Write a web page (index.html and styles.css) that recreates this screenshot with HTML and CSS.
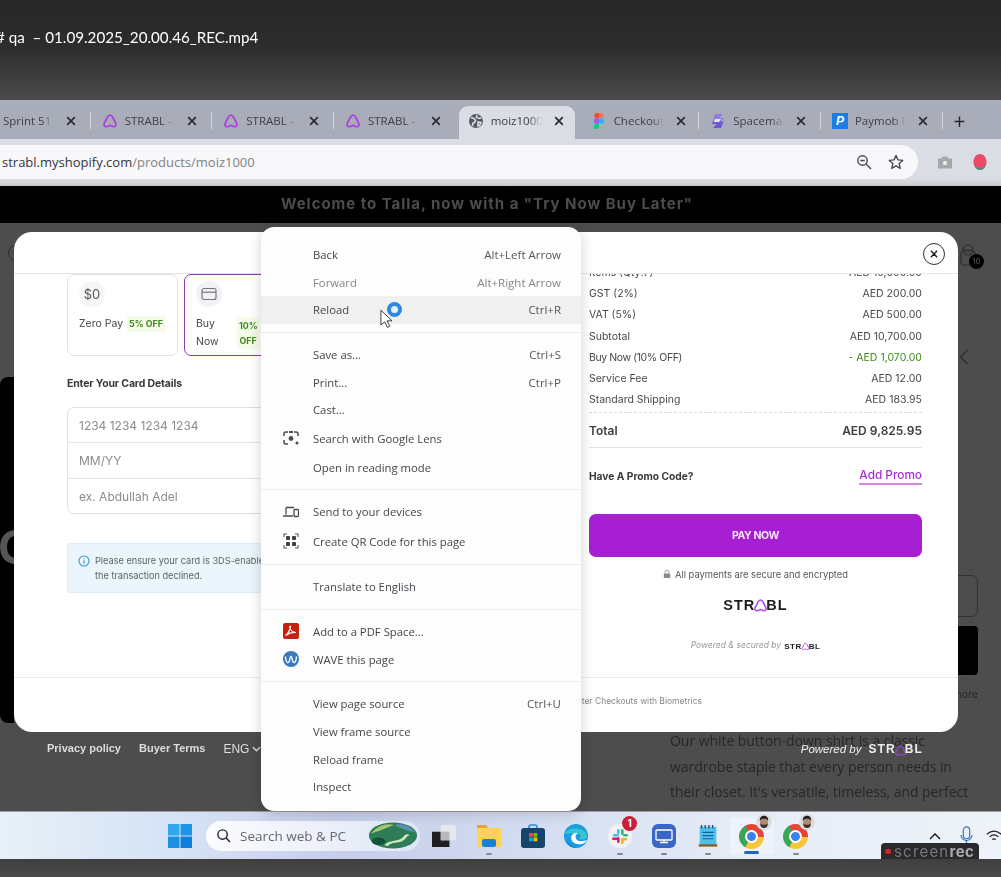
FILE: index.html
```html
<!DOCTYPE html>
<html lang="en">
<head>
    <meta charset="UTF-8">
    <meta name="viewport" content="width=device-width, initial-scale=1.0">
    <title>qa - 01.09.2025_20.00.46_REC.mp4</title>
    <link rel="stylesheet" href="styles.css">
</head>
<body>
    <svg class="defs" width="0" height="0">
        <symbol id="mark" viewBox="0 0 16 16">
            <path d="M8 2.2C9.5 2.2 10.3 3.6 11 5l2.6 5c1.2 2.4-.6 4-2.4 3.6-1.4-.3-2.2-1.2-3.2-1.2s-1.8.9-3.2 1.2C3 14 1.2 12.4 2.4 10L5 5c.7-1.4 1.5-2.8 3-2.8z" fill="none" stroke="currentColor" stroke-width="1.7"/>
        </symbol>
        <symbol id="close" viewBox="0 0 12 12">
            <path d="M2.2 2.2l7.6 7.6M9.8 2.2l-7.6 7.6" fill="none" stroke="currentColor" stroke-width="1.7"/>
        </symbol>
        <symbol id="face" viewBox="0 0 16 16">
            <circle cx="8" cy="8" r="8" fill="#dcdde0"/>
            <ellipse cx="8" cy="8.500" rx="4" ry="5" fill="#b08a6e"/>
            <path d="M3.800 7C3.500 3 6 1.800 8 1.800S12.500 3 12.200 7c-1-1.800-2-2.300-4.200-2.300S4.800 5.200 3.800 7z" fill="#27221f"/>
            <path d="M4.200 9.500c1 1 2 1.300 3.800 1.300s2.800-.3 3.800-1.300c0 3-1.600 4.500-3.800 4.500S4.200 12.500 4.200 9.500z" fill="#3a302a"/>
        </symbol>
    </svg>

    <div class="frame">
        <header class="video-title"><span>#&nbsp;qa &nbsp;– 01.09.2025_20.00.46_REC.mp4</span></header>

        <div class="tabstrip">
            <div class="tab">
                <span class="tab-icon"></span><span class="tab-label">Sprint 51</span>
                <svg class="tab-close"><use href="#close"/></svg>
            </div>
            <div class="tab">
                <svg class="tab-icon mark-icon"><use href="#mark"/></svg><span class="tab-label">STRABL - Checkout</span>
                <svg class="tab-close"><use href="#close"/></svg>
            </div>
            <div class="tab">
                <svg class="tab-icon mark-icon"><use href="#mark"/></svg><span class="tab-label">STRABL - Checkout</span>
                <svg class="tab-close"><use href="#close"/></svg>
            </div>
            <div class="tab tab-before-active">
                <svg class="tab-icon mark-icon"><use href="#mark"/></svg><span class="tab-label">STRABL - Checkout</span>
                <svg class="tab-close"><use href="#close"/></svg>
            </div>
            <div class="tab tab-active">
                <svg class="tab-icon" viewBox="0 0 16 16">
                    <circle cx="8" cy="8" r="7" fill="#55585f"/>
                    <path d="M3 4.5l3 1 1.5 2-1 2-1.5.5-.5 3M9 2l-.5 2.5 2.5 1 2.500-1M10 9l3 .5-1.500 3-1.500 .5z" fill="none" stroke="#dadde4" stroke-width="1.6"/>
                </svg>
                <span class="tab-label">moiz1000</span>
                <svg class="tab-close"><use href="#close"/></svg>
            </div>
            <div class="tab tab-after-active">
                <svg class="tab-icon" viewBox="0 0 16 16">
                    <path d="M8 0H5.500a2.700 2.700 0 0 0 0 5.300H8z" fill="#f24e1e"/>
                    <path d="M8 0h2.500a2.700 2.700 0 0 1 0 5.300H8z" fill="#ff7262"/>
                    <path d="M8 5.300H5.500a2.700 2.700 0 0 0 0 5.400H8z" fill="#a259ff"/>
                    <circle cx="10.500" cy="8" r="2.700" fill="#1abcfe"/>
                    <path d="M5.500 10.700H8v2.600a2.650 2.650 0 1 1-2.500-2.600z" fill="#0acf83"/>
                </svg>
                <span class="tab-label">Checkout</span>
                <svg class="tab-close"><use href="#close"/></svg>
            </div>
            <div class="tab">
                <svg class="tab-icon" viewBox="0 0 16 16">
                    <path d="M5 1h8L9.500 5H14l-3 4H2.500z" fill="#8f7be8"/>
                    <path d="M3 8.500h10.500L11 15H3l3.500-4H2z" fill="#6f57d8"/>
                    <path d="M5 6h6L9 9H4z" fill="#e6e3f5"/>
                </svg>
                <span class="tab-label">Spacemail</span>
                <svg class="tab-close"><use href="#close"/></svg>
            </div>
            <div class="tab">
                <span class="tab-icon paymob-icon">P</span><span class="tab-label">Paymob Dash</span>
                <svg class="tab-close"><use href="#close"/></svg>
            </div>
            <div class="tab-plus">+</div>
        </div>

        <div class="toolbar">
            <div class="omnibox">
                <span class="url"><b>strabl.myshopify.com</b>/products/moiz1000</span>
                <svg class="omni-icon" viewBox="0 0 16 16">
                    <circle cx="6.500" cy="6.500" r="4.700" fill="none" stroke="#45484f" stroke-width="1.400"/>
                    <path d="M10 10l5 5M4.300 6.500h4.400" fill="none" stroke="#45484f" stroke-width="1.400"/>
                </svg>
                <svg class="omni-icon" viewBox="0 0 16 16">
                    <path d="M8 1.500l2 4.400 4.700.5-3.500 3.200 1 4.700L8 11.900l-4.200 2.400 1-4.700L1.300 6.400 6 5.900z" fill="none" stroke="#45484f" stroke-width="1.400" stroke-linejoin="round"/>
                </svg>
            </div>
            <svg class="camera" viewBox="0 0 16 14">
                <path d="M1 3.500h3.500L6 1.500h4l1.500 2H15v10H1z" fill="#a5a7ab"/>
                <circle cx="8" cy="8" r="2.600" fill="#eee" stroke="#a5a7ab"/>
            </svg>
            <svg class="avatar" viewBox="0 0 16 18">
                <path d="M8 1c4 0 7 4 6.500 9-.4 4-3.500 7-6.500 7s-6-3-6.500-7C1 5 4 1 8 1z" fill="#ec4b68"/>
                <path d="M2.500 12c2 4 9 4 11 0-.5 3-3 5-5.500 5s-5-2-5.500-5z" fill="#2f9c74"/>
            </svg>
        </div>

        <div class="banner">Welcome to Talla, now with a "Try Now Buy Later"</div>

        <main class="page">
            <div class="page-left">
                <span class="store-logo"></span>
                <div class="hero"><span class="hero-letter">C</span></div>
            </div>
            <div class="page-right">
                <div class="cart">
                    <svg class="cart-icon" viewBox="0 0 18 22">
                        <rect x="1" y="7" width="14" height="14" rx="3" fill="none" stroke="#2e2e2e" stroke-width="1.200"/>
                        <circle cx="8" cy="6" r="5" fill="none" stroke="#2e2e2e" stroke-width="1.200"/>
                        <path d="M3 6h10" stroke="#2e2e2e"/>
                    </svg>
                    <span class="cart-badge">10</span>
                </div>
                <svg class="gallery-arrow" viewBox="0 0 10 16"><path d="M8.500 1L1.500 8l7 7" fill="none" stroke="#2e2e2e" stroke-width="1.300"/></svg>
                <div class="size-box"></div>
                <div class="buy-box"></div>
                <div class="more-link">Learn more</div>
                <p class="description">Our white button-down shirt is a classic wardrobe staple that every person needs in their closet. It's versatile, timeless, and perfect</p>
            </div>

            <div class="overlay">
                <section class="modal">
                    <div class="modal-head">
                        <button class="modal-close"><svg><use href="#close"/></svg></button>
                    </div>
                    <div class="modal-body">
                        <div class="pay-col">
                            <div class="plans">
                                <div class="plan">
                                    <span class="plan-icon">$0</span>
                                    <div class="plan-line"><span>Zero Pay</span><span class="off">5% OFF</span></div>
                                </div>
                                <div class="plan plan-active">
                                    <span class="plan-icon plan-icon-active">
                                        <svg viewBox="0 0 16 14"><rect x="1" y="1.500" width="14" height="11" rx="2" fill="none" stroke="#777" stroke-width="1.200"/><path d="M1 5.200h14" stroke="#777" stroke-width="1.200"/></svg>
                                    </span>
                                    <div class="plan-line"><span class="plan-name">Buy Now</span><span class="off off-wrap">10% OFF</span></div>
                                </div>
                            </div>
                            <h3 class="card-title">Enter Your Card Details</h3>
                            <div class="card-fields">
                                <div class="field">1234 1234 1234 1234</div>
                                <div class="field">MM/YY</div>
                                <div class="field">ex. Abdullah Adel</div>
                            </div>
                            <div class="notice">
                                <svg viewBox="0 0 12 12"><circle cx="6" cy="6" r="5" fill="none" stroke="#3d93cf" stroke-width="1.100"/><path d="M6 5.300v3.200M6 3.200v1" stroke="#3d93cf" stroke-width="1.100"/></svg>
                                <p>Please ensure your card is 3DS-enabled to avoid having the transaction declined.</p>
                            </div>
                        </div>

                        <div class="summary">
                            <div class="row"><span>Items (Qty:7)</span><span>AED 10,000.00</span></div>
                            <div class="row"><span>GST (2%)</span><span>AED 200.00</span></div>
                            <div class="row"><span>VAT (5%)</span><span>AED 500.00</span></div>
                            <div class="row"><span>Subtotal</span><span>AED 10,700.00</span></div>
                            <div class="row"><span class="tight">Buy Now (10% OFF)</span><span class="discount">- AED 1,070.00</span></div>
                            <div class="row"><span>Service Fee</span><span>AED 12.00</span></div>
                            <div class="row"><span>Standard Shipping</span><span>AED 183.95</span></div>
                            <div class="row row-total"><span>Total</span><span>AED 9,825.95</span></div>
                            <div class="row row-promo"><span>Have A Promo Code?</span><a class="add-promo">Add Promo</a></div>
                            <button class="pay-now">PAY NOW</button>
                            <div class="secure">
                                <svg viewBox="0 0 10 11"><path d="M2.500 5V3.300a2.500 2.500 0 0 1 5 0V5" fill="none" stroke="#8a8a8a"/><rect x="1" y="5" width="8" height="5.500" rx="1" fill="#8a8a8a"/></svg>
                                All payments are secure and encrypted
                            </div>
                            <div class="logo logo-big">STR<svg class="logo-mark"><use href="#mark"/></svg>BL</div>
                            <div class="secured-by"><i>Powered &amp; secured by</i><span class="logo logo-small">STR<svg class="logo-mark"><use href="#mark"/></svg>BL</span></div>
                        </div>
                    </div>
                    <div class="modal-foot">Enjoy Faster Checkouts with Biometrics</div>
                </section>
                <div class="legal">
                    <div class="legal-links">
                        <span>Privacy policy</span><span>Buyer Terms</span><span class="lang">ENG <svg viewBox="0 0 10 6"><path d="M1 1l4 4 4-4" fill="none" stroke="#ddd" stroke-width="1.500"/></svg></span>
                    </div>
                    <div class="powered"><i>Powered by</i><span class="logo logo-white">STR<svg class="logo-mark"><use href="#mark"/></svg>BL</span></div>
                </div>
            </div>
        </main>

        <footer class="taskbar">
            <svg class="win" viewBox="0 0 24 24">
                <rect width="11.500" height="11.500" fill="#2fa8ee"/><rect x="12.500" width="11.500" height="11.500" fill="#1c95e6"/>
                <rect y="12.500" width="11.500" height="11.500" fill="#1b8fe4"/><rect x="12.500" y="12.500" width="11.500" height="11.500" fill="#0f7fd9"/>
            </svg>
            <div class="search">
                <svg viewBox="0 0 16 16"><circle cx="7" cy="7" r="5" fill="none" stroke="#222" stroke-width="1.500"/><path d="M10.500 10.500L15 15" stroke="#222" stroke-width="1.500"/></svg>
                <span>Search web &amp; PC</span>
                <svg class="search-art" viewBox="0 0 50 28">
                    <ellipse cx="25" cy="14" rx="25" ry="13.500" fill="#2f7d58"/>
                    <path d="M2 12C10 3 18 1 26 3c-8 3-14 6-24 9z" fill="#a5c46e"/>
                    <path d="M26 3c8-2 16 0 22 8-8-2-16-5-22-8z" fill="#5d8fb0"/>
                    <path d="M16 24c4-6 16-3 20-9 2-3 5-3 6-1-3 0-3 3-6 5-5 4-13 1-16 6z" fill="#cfe6b8"/>
                    <ellipse cx="10" cy="20" rx="7" ry="4" fill="#14523c"/>
                </svg>
            </div>
            <div class="app app-first">
                <svg viewBox="0 0 22 22"><rect x="8" y="1" width="14" height="14" rx="2" fill="#e9e9ec"/><path d="M0 7h8v8h8v6H0z" fill="#1f1f22"/><rect x="8" y="7" width="8" height="8" fill="#b9b9bd"/></svg>
            </div>
            <div class="app app-running">
                <svg viewBox="0 0 24 22"><path d="M0 2a2 2 0 0 1 2-2h7l2 3h11a2 2 0 0 1 2 2v15a2 2 0 0 1-2 2H2a2 2 0 0 1-2-2z" fill="#ffd257"/><path d="M0 0h9l2 3H0z" fill="#e3a72f"/><rect x="5" y="14" width="14" height="8" rx="2" fill="#1c7fd6"/></svg>
            </div>
            <div class="app">
                <svg viewBox="0 0 24 24"><path d="M8 5V3a2 2 0 0 1 2-2h4a2 2 0 0 1 2 2v2" fill="none" stroke="#2a8fe0" stroke-width="1.600"/><rect y="4" width="24" height="20" rx="3" fill="#15446f"/><rect x="8" y="9" width="3.800" height="3.800" fill="#f25022"/><rect x="12.500" y="9" width="3.800" height="3.800" fill="#7fba00"/><rect x="8" y="13.500" width="3.800" height="3.800" fill="#00a4ef"/><rect x="12.500" y="13.500" width="3.800" height="3.800" fill="#ffb900"/></svg>
            </div>
            <div class="app">
                <svg viewBox="0 0 24 24"><circle cx="12" cy="12" r="12" fill="#1b9de2"/><path d="M1 10C3 3 21 2 23 12c.5 3-4 4-8 3 3-2 2-6-3-6-6 0-10 1-11 1z" fill="#37c6d0"/><path d="M12 9c-6 0-7 9 1 11 4 1 8 0 10-4-3 1-8 2-10 0-2-2-2-5 1-7z" fill="#fff"/><path d="M2 15c1 6 7 9 12 9-7-1-11-5-12-9z" fill="#0c59a4"/></svg>
            </div>
            <div class="app app-running">
                <svg viewBox="0 0 24 24">
                    <circle cx="12" cy="12" r="12" fill="#f2f2f4"/>
                    <rect x="5" y="10" width="6" height="2.600" rx="1.300" fill="#36c5f0"/><rect x="9" y="5" width="2.600" height="5" rx="1.300" fill="#36c5f0"/>
                    <rect x="13" y="5" width="2.600" height="6" rx="1.300" fill="#2eb67d"/><rect x="15" y="10" width="5" height="2.600" rx="1.300" fill="#2eb67d"/>
                    <rect x="13" y="14" width="6" height="2.600" rx="1.300" fill="#ecb22e"/><rect x="13" y="15" width="2.600" height="5" rx="1.300" fill="#ecb22e"/>
                    <rect x="9" y="13" width="2.600" height="6" rx="1.300" fill="#e01e5a"/><rect x="4" y="13.500" width="6" height="2.600" rx="1.300" fill="#e01e5a"/>
                </svg>
                <span class="app-badge">1</span>
            </div>
            <div class="app app-running">
                <svg viewBox="0 0 24 24"><rect width="24" height="24" rx="6" fill="#3c66c4"/><rect x="4" y="6" width="16" height="10" rx="1" fill="none" stroke="#fff" stroke-width="1.300"/><path d="M8 18.500h8M12 16v2" stroke="#fff" stroke-width="1.300"/></svg>
            </div>
            <div class="app app-running">
                <svg viewBox="0 0 20 26"><rect x="1" y="3" width="18" height="20" fill="#4ec0ee"/><path d="M4 9h12M4 12.500h12M4 16h12" stroke="#14609a" stroke-width="1.300"/><path d="M3 1v4M7 1v4M11 1v4M15 1v4" stroke="#2c4d73" stroke-width="1.500"/><rect y="22" width="20" height="2.500" fill="#8c5a1e"/></svg>
            </div>
            <div class="app app-active">
                <span class="chrome"><span class="chrome-core"></span></span>
                <svg class="chrome-face"><use href="#face"/></svg>
            </div>
            <div class="app app-running">
                <span class="chrome"><span class="chrome-core"></span></span>
                <svg class="chrome-face"><use href="#face"/></svg>
            </div>
            <div class="tray">
                <svg class="tray-up" viewBox="0 0 12 8"><path d="M1 7l5-5 5 5" fill="none" stroke="#111" stroke-width="1.400"/></svg>
                <svg class="tray-mic" viewBox="0 0 14 22"><rect x="3.500" y="1" width="7" height="13" rx="3.500" fill="none" stroke="#3a77c8" stroke-width="1.300"/><path d="M1 10a6 6 0 0 0 12 0M7 16v5" fill="none" stroke="#3a77c8" stroke-width="1.300"/></svg>
                <svg class="tray-wifi" viewBox="0 0 18 14"><path d="M1 5c5-4.500 11-4.500 16 0M4 8c3-2.600 7-2.600 10 0M7 11c1.200-1 2.800-1 4 0" fill="none" stroke="#222" stroke-width="1.300"/></svg>
            </div>
            <div class="recorder"><i></i><span>screen</span><b>rec</b></div>
        </footer>
        <div class="video-foot"></div>

        <nav class="menu">
            <div class="item"><span>Back</span><kbd>Alt+Left Arrow</kbd></div>
            <div class="item item-off"><span>Forward</span><kbd>Alt+Right Arrow</kbd></div>
            <div class="item item-hover"><span>Reload</span><kbd>Ctrl+R</kbd></div>
            <hr>
            <div class="item"><span>Save as...</span><kbd>Ctrl+S</kbd></div>
            <div class="item"><span>Print...</span><kbd>Ctrl+P</kbd></div>
            <div class="item"><span>Cast...</span></div>
            <div class="item item-tall">
                <svg class="item-icon" viewBox="0 0 16 16"><path d="M5 2H3a2 2 0 0 0-2 2v2M1 10v2a2 2 0 0 0 2 2h2M11 2h2a2 2 0 0 1 2 2v2M11 14h0" fill="none" stroke="#4a4a4f" stroke-width="1.500"/><circle cx="8" cy="8.500" r="2.400" fill="#4a4a4f"/><rect x="6" y="1" width="4" height="2" fill="#4a4a4f"/><circle cx="14" cy="13" r="1.500" fill="#4a4a4f"/></svg>
                <span>Search with Google Lens</span>
            </div>
            <div class="item item-tall"><span>Open in reading mode</span></div>
            <hr class="hr-tight">
            <div class="item item-tall">
                <svg class="item-icon" viewBox="0 0 16 14"><path d="M3 2.500h8M3 2.500v7M0 11h10" fill="none" stroke="#4a4a4f" stroke-width="1.300"/><rect x="11" y="4.500" width="4.500" height="7" rx="1" fill="none" stroke="#4a4a4f" stroke-width="1.300"/></svg>
                <span>Send to your devices</span>
            </div>
            <div class="item item-tall">
                <svg class="item-icon" viewBox="0 0 16 16"><path d="M4 1H1v3M12 1h3v3M1 12v3h3M15 12v3h-3" fill="none" stroke="#55555a" stroke-width="1.100"/><rect x="3" y="3" width="4" height="4" rx=".8" fill="#3f3f44"/><rect x="9" y="3" width="4" height="4" rx=".8" fill="#3f3f44"/><rect x="3" y="9" width="4" height="4" rx=".8" fill="#3f3f44"/><rect x="9" y="9" width="4" height="4" rx=".8" fill="#3f3f44"/></svg>
                <span>Create QR Code for this page</span>
            </div>
            <hr>
            <div class="item"><span>Translate to English</span></div>
            <hr>
            <div class="item">
                <svg class="item-icon" viewBox="0 0 16 16"><rect width="16" height="16" rx="2" fill="#c4210e"/><path d="M2.500 12.500c2-1 3.500-3.500 5-8.500.3-1.300-1-1.300-.8 0 .4 3 2.300 5 6.300 5.500-3-.3-7 .5-10.500 3z" fill="none" stroke="#fff" stroke-width="1.200"/></svg>
                <span>Add to a PDF Space...</span>
            </div>
            <div class="item">
                <svg class="item-icon" viewBox="0 0 16 16"><circle cx="8" cy="8" r="8" fill="#3c78c0"/><path d="M2.500 5.500c.5 7 3 7.500 4 4 .6-3 .8-4 1.500-4s1 1.500 1.500 4c1 3.500 3.500 3 4-4" fill="none" stroke="#fff" stroke-width="1.300"/></svg>
                <span>WAVE this page</span>
            </div>
            <hr>
            <div class="item"><span>View page source</span><kbd>Ctrl+U</kbd></div>
            <div class="item"><span>View frame source</span></div>
            <div class="item"><span>Reload frame</span></div>
            <div class="item"><span>Inspect</span></div>

            <span class="spinner"></span>
            <svg class="pointer" viewBox="0 0 14 21"><path d="M1 1v16l4-3.500 3 6 2.500-1.200-3-5.800H13z" fill="#fff" stroke="#333" stroke-width="1"/></svg>
        </nav>
    </div>
</body>
</html>
```

FILE: styles.css
```css
* {
    box-sizing: border-box;
}
html, body {
    margin: 0;
    padding: 0;
    background-color: #474747;
}
.defs {
    position: absolute;
}
.frame {
    position: relative;
    width: 1001px;
    height: 877px;
    overflow: hidden;
    font-family: "Inter", "Liberation Sans", sans-serif;
    filter: blur(0.35px);
}

/* video player title */
.video-title {
    height: 100px;
    padding-top: 28px;
    background: linear-gradient(#272727 0%, #2c2c2c 45%, #4b4b4b 100%);
    color: #fff;
    font-family: "Lato", sans-serif;
    font-size: 15.2px;
    line-height: 19px;
    white-space: nowrap;
}
.video-title span {
    display: block;
    margin-left: -4px;
}

/* chrome tabs */
.tabstrip {
    display: flex;
    align-items: center;
    height: 39px;
    padding-top: 6px;
    background-color: #a9adb9;
    font-family: "Open Sans", sans-serif;
    font-size: 11.5px;
    color: #3f4148;
    overflow: hidden;
}
.tab {
    position: relative;
    flex: 0 0 121.67px;
    min-width: 0;
    display: flex;
    align-items: center;
    gap: 7px;
    height: 33px;
    padding: 0 14px 4px 11px;
}
.tab:first-child {
    margin-left: -31px;
}
.tab::after {
    content: "";
    position: absolute;
    right: 0;
    top: 6px;
    width: 1px;
    height: 17px;
    background-color: #d4d6dc;
}
.tab-before-active::after,
.tab-active::after {
    display: none;
}
.tab-active {
    flex-basis: 116px;
    margin-left: 3px;
    padding-left: 9px;
    padding-right: 10px;
    background-color: #dadde4;
    border-radius: 9px 9px 0 0;
}
.tab-after-active {
    flex-basis: 124.67px;
    padding-left: 16px;
    padding-right: 12px;
}
.tab-icon {
    flex: 0 0 16px;
    width: 16px;
    height: 16px;
}
.mark-icon {
    color: #ab3fe0;
}
.paymob-icon {
    background-color: #1a7de8;
    color: #fff;
    font: italic bold 12px/16px "Liberation Sans", sans-serif;
    text-align: center;
}
.tab-label {
    flex: 1;
    min-width: 0;
    margin-right: 4px;
    overflow: hidden;
    white-space: nowrap;
    -webkit-mask-image: linear-gradient(to right, #000 75%, transparent 100%);
    mask-image: linear-gradient(to right, #000 75%, transparent 100%);
}
.tab-close {
    flex: 0 0 12px;
    width: 12px;
    height: 12px;
    color: #2b2c30;
}
.tab-plus {
    margin: -4px 0 0 11px;
    font-size: 21px;
    line-height: 24px;
    color: #26272b;
}

/* address bar */
.toolbar {
    display: flex;
    align-items: center;
    height: 47px;
    padding-bottom: 1px;
    background: linear-gradient(#dadde4 85%, #c9c9c9 100%);
}
.omnibox {
    display: flex;
    align-items: center;
    width: 918px;
    height: 34px;
    padding: 0 14px 0 2px;
    background-color: #f8f8fa;
    border-radius: 0 17px 17px 0;
    gap: 16px;
}
.url {
    flex: 1;
    font-family: "Open Sans", sans-serif;
    font-size: 13px;
    color: #808185;
}
.url b {
    font-weight: 400;
    color: #35363a;
}
.omni-icon {
    width: 16px;
    height: 16px;
}
.camera {
    width: 16px;
    height: 14px;
    margin-left: 19px;
}
.avatar {
    width: 16px;
    height: 18px;
    margin-left: 19px;
}

.banner {
    height: 37px;
    padding-right: 27px;
    background-color: #000;
    color: #4c4c4c;
    font-size: 15px;
    font-weight: 700;
    letter-spacing: 0.97px;
    line-height: 36px;
    text-align: center;
}

/* shop page behind the modal */
.page {
    position: relative;
    display: flex;
    justify-content: space-between;
    height: 588px;
    background-color: #4d4d4d;
    color: #272727;
}
.page-left {
    width: 14px;
    overflow: hidden;
}
.store-logo {
    display: block;
    width: 16px;
    height: 16px;
    margin: 22px 0 0 8px;
    border: 1px solid #2e2e2e;
    border-radius: 50%;
}
.hero {
    display: flex;
    align-items: center;
    height: 346px;
    margin-top: 116px;
    background-color: #000;
    border-radius: 8px 0 0 8px;
    overflow: hidden;
}
.hero-letter {
    margin: -6px 0 0 -2px;
    font-size: 46px;
    font-weight: 700;
    color: #555;
}
.page-right {
    display: flex;
    flex-direction: column;
    width: 331px;
    padding-right: 23px;
}
.cart {
    position: relative;
    align-self: flex-end;
    width: 18px;
    height: 22px;
    margin-top: 21px;
}
.cart-icon {
    display: block;
    width: 18px;
    height: 22px;
}
.cart-badge {
    position: absolute;
    right: -6px;
    bottom: -3px;
    width: 15px;
    height: 15px;
    border-radius: 50%;
    background-color: #000;
    color: #555;
    font-size: 8px;
    line-height: 15px;
    text-align: center;
}
.gallery-arrow {
    align-self: flex-end;
    width: 10px;
    height: 16px;
    margin: 83px 9px 0 0;
}
.size-box {
    height: 42px;
    margin-top: 210px;
    border: 1px solid #333;
    border-radius: 6px;
}
.buy-box {
    height: 49px;
    margin-top: 9px;
    background-color: #000;
    border-radius: 4px;
}
.more-link {
    margin-top: 13px;
    font-size: 10.500px;
    line-height: 14px;
    text-align: right;
}
.description {
    margin: 26px 0 0;
    font-family: "Open Sans", sans-serif;
    font-size: 14px;
    line-height: 25.500px;
    letter-spacing: -0.05px;
}

.overlay {
    position: absolute;
    left: 14px;
    right: 43px;
    top: 9px;
    bottom: 0;
}
.modal {
    display: flex;
    flex-direction: column;
    height: 500px;
    background-color: #fff;
    border-radius: 18px;
    overflow: hidden;
    color: #484848;
}
.modal-head {
    display: flex;
    align-items: center;
    justify-content: flex-end;
    flex: 0 0 42px;
    padding: 3px 13px 0 0;
    border-bottom: 1px solid #e3e3e3;
}
.modal-close {
    display: flex;
    align-items: center;
    justify-content: center;
    width: 22px;
    height: 22px;
    padding: 0;
    background: none;
    border: 1.500px solid #333;
    border-radius: 50%;
    color: #222;
}
.modal-close svg {
    width: 10px;
    height: 10px;
}
.modal-body {
    flex: 1;
    display: flex;
    min-height: 0;
    overflow: hidden;
    padding: 0 36px 0 53px;
    gap: 68px;
}
.pay-col {
    flex: 1;
    min-width: 0;
}
.plans {
    display: flex;
    gap: 6px;
}
.plan {
    flex: 0 0 111px;
    min-width: 0;
    height: 82px;
    padding: 6px 11px;
    border: 1px solid #e2e2e2;
    border-radius: 7px;
}
.plan-active {
    border: 1.500px solid #8d3fa8;
}
.plan-icon {
    display: flex;
    align-items: center;
    justify-content: center;
    width: 26px;
    height: 26px;
    border-radius: 50%;
    background-color: #f6f6f6;
    font-size: 13px;
    color: #555;
}
.plan-icon-active {
    background-color: #f3f0f8;
}
.plan-icon-active svg {
    width: 16px;
    height: 14px;
}
.plan-line {
    display: flex;
    align-items: center;
    gap: 4px;
    margin-top: 8px;
    font-size: 10.500px;
    line-height: 18px;
    white-space: nowrap;
}
.plan-name {
    width: 32px;
    margin-right: 5px;
    white-space: normal;
}
.off {
    padding: 1px 2px;
    background-color: #f4fbe9;
    color: #3f8a1f;
    font-size: 8.800px;
    font-weight: 700;
    line-height: 14px;
}
.off-wrap {
    width: 22px;
    white-space: normal;
    text-align: center;
    line-height: 15px;
}
.card-title {
    margin: 21px 0 17px;
    font-size: 10.500px;
    font-weight: 700;
    line-height: 13px;
    letter-spacing: -0.15px;
    color: #383838;
}
.card-fields {
    border: 1px solid #dedede;
    border-radius: 7px;
    height: 107px;
    overflow: hidden;
}
.field {
    height: 35.300px;
    padding-left: 11px;
    font-size: 12px;
    line-height: 35px;
    color: #8b8b8b;
    border-bottom: 1px solid #e4e4e4;
}
.field:last-child {
    border-bottom: 0;
}
.notice {
    display: flex;
    gap: 5px;
    height: 50px;
    margin-top: 29px;
    padding: 9px 10px;
    background-color: #eaf5fc;
    border: 1px solid #dfeef8;
    border-radius: 3px;
}
.notice svg {
    flex: 0 0 12px;
    width: 12px;
    height: 12px;
    margin-top: 2px;
}
.notice p {
    max-width: 250px;
    margin: 0;
    font-size: 9.200px;
    line-height: 15px;
    color: #566;
}
.summary {
    flex: 0 0 333px;
    margin-top: -12.500px;
    font-size: 10.500px;
}
.row {
    display: flex;
    justify-content: space-between;
    align-items: center;
    height: 21.300px;
}
.tight {
    letter-spacing: -0.4px;
}
.discount {
    color: #3f8a1f;
}
.row-total {
    height: 36px;
    margin-top: 1.500px;
    border-top: 1px dashed #dcdcdc;
    border-bottom: 1px solid #e2e2e2;
    font-size: 12px;
    font-weight: 600;
    color: #3d3d3d;
}
.row-promo {
    height: 56px;
    font-size: 10.200px;
    font-weight: 700;
    color: #3a3a3a;
}
.add-promo {
    font-size: 11.800px;
    font-weight: 500;
    color: #a62dd0;
    border-bottom: 2px solid #d585e6;
    line-height: 16px;
}
.pay-now {
    display: block;
    width: 100%;
    height: 43px;
    margin-top: 10px;
    background-color: #a61fd3;
    border: 0;
    border-radius: 7px;
    color: #f5e6fa;
    font: 700 10.500px "Inter", sans-serif;
    letter-spacing: -0.4px;
}
.secure {
    display: flex;
    align-items: center;
    justify-content: center;
    gap: 4px;
    height: 16px;
    margin-top: 9px;
    font-size: 9.350px;
    color: #555;
}
.secure svg {
    width: 8px;
    height: 10px;
}
.logo {
    display: flex;
    align-items: center;
    font-family: "Liberation Sans", sans-serif;
    font-weight: 700;
    color: #1c1c1c;
    white-space: nowrap;
}
.logo-mark {
    color: #b04ae6;
    flex: none;
}
.logo-big {
    justify-content: center;
    height: 18px;
    margin-top: 14px;
    font-size: 14.500px;
    letter-spacing: 1px;
}
.logo-big .logo-mark {
    width: 15px;
    height: 15px;
    margin: 1px -2px 0 -2px;
}
.secured-by {
    display: flex;
    align-items: center;
    justify-content: center;
    gap: 3px;
    height: 18px;
    margin-top: 22px;
    font-size: 8.500px;
    color: #999;
}
.logo-small {
    font-size: 8px;
    letter-spacing: 0.5px;
    margin-top: 2px;
}
.logo-small .logo-mark {
    width: 9px;
    height: 9px;
    margin: 1px -1px 0;
}
.modal-foot {
    flex: 0 0 55px;
    padding-right: 256px;
    border-top: 1px solid #ececec;
    font-size: 8.500px;
    line-height: 46px;
    text-align: right;
    color: #888;
}

/* links under the modal */
.legal {
    display: flex;
    justify-content: space-between;
    align-items: center;
    height: 21px;
    margin-top: 6px;
    padding: 0 35px 0 33px;
}
.legal-links {
    display: flex;
    gap: 18px;
    font-family: "Liberation Sans", sans-serif;
    font-size: 11px;
    font-weight: 700;
    color: #ddd;
}
.lang {
    display: flex;
    align-items: center;
    gap: 3px;
    font-size: 12px;
    font-weight: 400;
}
.lang svg {
    width: 9px;
    height: 6px;
    margin-top: 1px;
}
.powered {
    display: flex;
    align-items: center;
    gap: 7px;
    font-family: "Liberation Sans", sans-serif;
    font-size: 11.500px;
    color: #eee;
}
.logo-white {
    color: #eee;
    font-size: 12px;
    letter-spacing: 1.100px;
}
.logo-white .logo-mark {
    width: 13px;
    height: 13px;
    margin: 3px -2px 0;
    color: #8a4bc2;
}

/* windows taskbar */
.taskbar {
    position: relative;
    display: flex;
    align-items: center;
    height: 48px;
    padding-left: 168px;
    background: linear-gradient(to right, #e6f0f7 0%, #d6e2f6 18%, #c6cee9 34%, #d2daf0 50%, #e6edf7 75%, #eef2f9 100%);
    border-top: 1px solid #9a9aa0;
}
.win {
    flex: none;
    width: 24px;
    height: 24px;
    margin-right: 14px;
}
.search {
    flex: none;
    display: flex;
    align-items: center;
    gap: 9px;
    width: 214px;
    height: 30px;
    padding: 0 2px 0 10px;
    background: linear-gradient(to right, #fbfcfe, #dfe6f6);
    border-radius: 15px;
    font-family: "Open Sans", sans-serif;
    font-size: 13.500px;
    color: #62666e;
}
.search svg {
    flex: 0 0 15px;
    width: 15px;
    height: 15px;
}
.search span {
    flex: 1;
    white-space: nowrap;
}
.search .search-art {
    flex: 0 0 50px;
    width: 50px;
    height: 27px;
}
.app {
    position: relative;
    flex: 0 0 43.800px;
    display: flex;
    align-items: center;
    justify-content: center;
    height: 36px;
}
.app-first {
    flex-basis: 46px;
    margin-left: 1px;
}
.app svg {
    width: 24px;
    height: 24px;
}
.app-running::after {
    content: "";
    position: absolute;
    left: 19px;
    bottom: -1px;
    width: 6px;
    height: 2px;
    border-radius: 1px;
    background-color: #86888f;
}
.app-active {
    background-color: #eef3fb;
    border-radius: 4px;
}
.app-active::after {
    content: "";
    position: absolute;
    left: 14px;
    bottom: 0;
    width: 15px;
    height: 3px;
    border-radius: 2px;
    background-color: #2367c0;
}
.app-badge {
    position: absolute;
    top: -2px;
    right: 5px;
    width: 15px;
    height: 15px;
    border-radius: 50%;
    background-color: #c9213a;
    color: #fff;
    font-size: 10px;
    font-weight: 700;
    line-height: 15px;
    text-align: center;
}
.chrome {
    display: flex;
    align-items: center;
    justify-content: center;
    width: 25px;
    height: 25px;
    margin-top: 1px;
    border-radius: 50%;
    background: conic-gradient(from -30deg, #e2463a 0deg 120deg, #f6c739 120deg 240deg, #3aa655 240deg 360deg);
}
.chrome-core {
    box-sizing: content-box;
    width: 9px;
    height: 9px;
    border-radius: 50%;
    background-color: #3b82ee;
    border: 2px solid #fff;
}
.app .chrome-face {
    position: absolute;
    top: -4px;
    right: 2px;
    width: 16px;
    height: 16px;
}
.tray {
    flex: none;
    display: flex;
    align-items: center;
    margin-left: 112px;
}
.tray-up {
    flex: none;
    width: 12px;
    height: 8px;
}
.tray-mic {
    flex: none;
    width: 13px;
    height: 20px;
    margin-left: 19px;
}
.tray-wifi {
    flex: none;
    width: 16px;
    height: 14px;
    margin-left: 13px;
}
.recorder {
    position: absolute;
    left: 881px;
    bottom: 0;
    display: flex;
    align-items: center;
    width: 98px;
    height: 16px;
    padding-left: 4px;
    background-color: #2a2a2c;
    border-radius: 4px 4px 0 0;
    font-size: 15px;
    line-height: 15px;
    letter-spacing: 1.2px;
    color: #77787c;
}
.recorder i {
    width: 6px;
    height: 5px;
    margin-right: 3px;
    background-color: #d0242a;
    border-radius: 2px;
}
.recorder b {
    color: #a9aaae;
    letter-spacing: 0.5px;
}
.video-foot {
    height: 18px;
    background: linear-gradient(#3f3f3f, #4a4a4a);
}

/* context menu */
.menu {
    position: absolute;
    left: 261px;
    top: 227px;
    width: 320px;
    height: 584px;
    padding-top: 13.500px;
    background-color: #fdfdfd;
    border-radius: 13px;
    box-shadow: 0 2px 14px rgba(0, 0, 0, 0.18);
    font-family: "Open Sans", sans-serif;
    font-size: 11.300px;
    color: #45464b;
}
.item {
    position: relative;
    display: flex;
    align-items: center;
    height: 27.700px;
    padding: 0 20px 0 52px;
}
.item-tall {
    height: 29.300px;
}
.item span {
    flex: 1;
}
.item kbd {
    font-family: inherit;
    font-size: 11.500px;
    color: #55565b;
}
.item-off,
.item-off kbd {
    color: #85868a;
}
.item-hover {
    background-color: #f0f0f0;
}
.item-icon {
    position: absolute;
    left: 22px;
    top: 50%;
    width: 16px;
    height: 16px;
    margin-top: -8px;
}
.menu hr {
    height: 1px;
    margin: 8px 0;
    border: 0;
    background-color: #ececf0;
}
.menu hr.hr-tight {
    margin: 7px 0;
}
.spinner {
    position: absolute;
    left: 126px;
    top: 75px;
    width: 15px;
    height: 15px;
    border: 4px solid #2f86e3;
    border-radius: 50%;
    background-color: #e8f2fc;
}
.pointer {
    position: absolute;
    left: 119px;
    top: 82px;
    width: 13px;
    height: 20px;
}
```
